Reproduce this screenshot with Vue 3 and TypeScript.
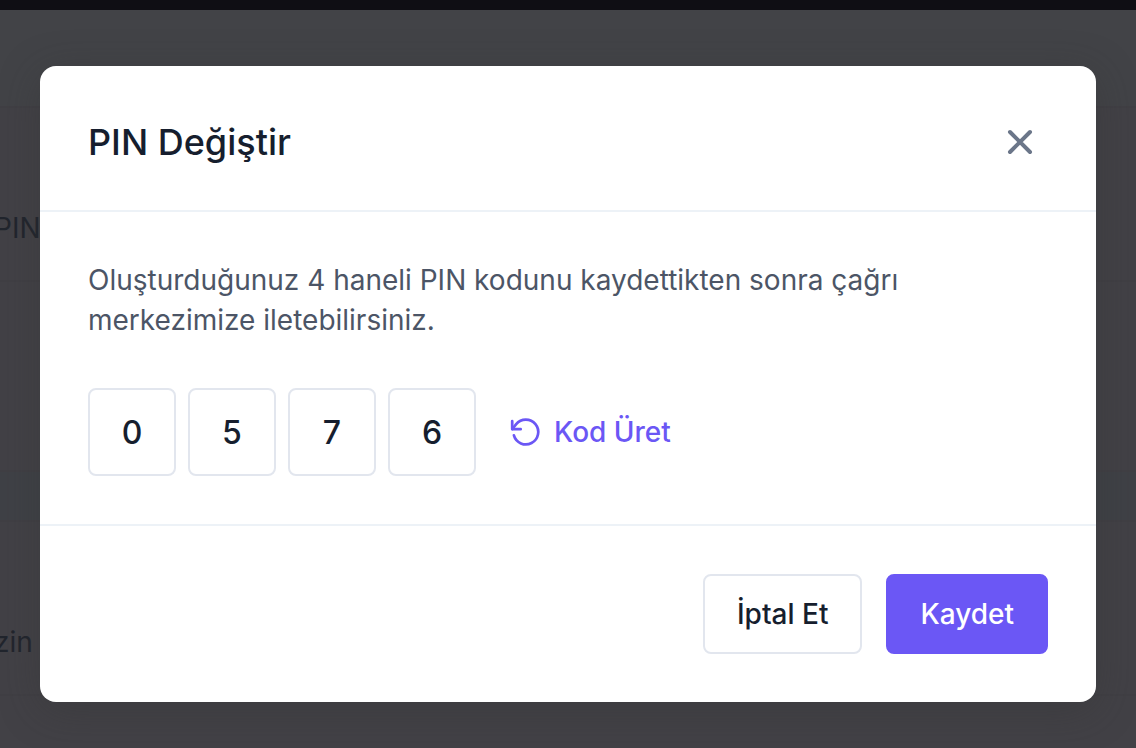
<script setup lang="ts">
import { ref } from 'vue'

const open = ref(true)
const digits = ref<string[]>(['0', '5', '7', '6'])

function generate(): void {
  digits.value = digits.value.map(() => String(Math.floor(Math.random() * 10)))
}

function close(): void {
  open.value = false
}
</script>

<template>
  <div class="screen">
    <div class="page" aria-hidden="true">
      <div class="topbar"></div>
      <div class="heading"></div>
      <div class="row row-pin"><span class="label">PIN</span></div>
      <div class="row row-blank"></div>
      <div class="row row-band"></div>
      <div class="row row-permission"><span class="label">zin</span></div>
    </div>

    <div v-if="open" class="overlay">
      <section class="modal" role="dialog" aria-modal="true" aria-labelledby="pin-title">
        <header class="modal-header">
          <h1 id="pin-title">PIN Değiştir</h1>
          <button class="close" type="button" aria-label="Kapat" @click="close">
            <svg viewBox="0 0 32 32" fill="none" stroke="currentColor" stroke-width="4" stroke-linecap="round">
              <path d="M6 6 26 26M26 6 6 26" />
            </svg>
          </button>
        </header>

        <div class="modal-body">
          <p>Oluşturduğunuz 4 haneli PIN kodunu kaydettikten sonra çağrı merkezimize iletebilirsiniz.</p>
          <div class="code">
            <input
              v-for="(_, i) in digits"
              :key="i"
              v-model="digits[i]"
              class="digit"
              type="text"
              inputmode="numeric"
              maxlength="1"
              :aria-label="`PIN ${i + 1}`"
            />
            <button class="generate" type="button" @click="generate">
              <svg
                viewBox="0 0 32 32"
                fill="none"
                stroke="currentColor"
                stroke-width="2.7"
                stroke-linecap="round"
                stroke-linejoin="round"
              >
                <path d="M2.2 5.2V13.2H10.7" />
                <path d="M2.4 13 6.2 8.2A12.4 12.4 0 1 1 3.9 19.4" />
              </svg>
              Kod Üret
            </button>
          </div>
        </div>

        <footer class="modal-footer">
          <button class="btn btn-cancel" type="button" @click="close">İptal Et</button>
          <button class="btn btn-save" type="button" @click="close">Kaydet</button>
        </footer>
      </section>
    </div>
  </div>
</template>

<style>
body {
  margin: 0;
}
</style>

<style scoped>
.screen {
  position: relative;
  min-height: 100vh;
  overflow: hidden;
  background: #424146;
  font-family: Inter, 'Liberation Sans', sans-serif;
  color: #161e2e;
}

.screen * {
  box-sizing: border-box;
}

.page {
  position: absolute;
  inset: 0;
  overflow: hidden;
  font-size: 28px;
  line-height: 40px;
  color: #21252d;
}

.topbar {
  height: 10px;
  background: #0f0e14;
}

.heading {
  height: 96px;
  background: #424347;
}

.row {
  display: flex;
  align-items: center;
  border-top: 2px solid #403f44;
}

.row-pin {
  height: 174px;
  padding-top: 68px;
}

.row-blank {
  height: 190px;
}

.row-band {
  height: 50px;
  background: #3f4146;
}

.row-permission {
  height: 176px;
  padding-top: 68px;
  border-bottom: 2px solid #403f44;
}

.label {
  margin-left: -6px;
}

.overlay {
  position: relative;
  padding: 66px 40px 46px;
}

.modal {
  border-radius: 16px;
  background: #fff;
  box-shadow: 0 8px 40px rgba(50, 50, 48, 0.35);
}

.modal-header {
  display: flex;
  align-items: center;
  justify-content: space-between;
  padding: 48px 48px 40px;
  border-bottom: 2px solid #edf2f7;
}

h1 {
  margin: 0;
  font-size: 36px;
  font-weight: 500;
  line-height: 56px;
}

button {
  font: inherit;
  cursor: pointer;
}

.close {
  display: flex;
  align-items: center;
  justify-content: center;
  width: 56px;
  height: 56px;
  padding: 0;
  border: 0;
  background: none;
  color: #6b7689;
}

svg {
  width: 32px;
  height: 32px;
}

.modal-body {
  padding: 48px;
}

p {
  margin: 0 0 48px;
  font-size: 28px;
  line-height: 40px;
  color: #4c5566;
}

.code {
  display: flex;
  align-items: center;
  gap: 12px;
}

.digit {
  width: 88px;
  height: 88px;
  padding: 0;
  border: 2px solid #e2e6ee;
  border-radius: 8px;
  background: #fff;
  color: inherit;
  font-family: inherit;
  font-size: 32px;
  font-weight: 500;
  text-align: center;
}

.generate {
  display: flex;
  align-items: center;
  gap: 12px;
  margin-left: 22px;
  padding: 0;
  border: 0;
  background: none;
  color: #6b57f5;
  font-size: 28px;
  font-weight: 500;
  line-height: 40px;
}

.modal-footer {
  display: flex;
  justify-content: flex-end;
  gap: 24px;
  padding: 48px;
  border-top: 2px solid #edf2f7;
}

.btn {
  height: 80px;
  padding: 0 32px;
  border: 2px solid #e2e6ee;
  border-radius: 8px;
  background: #fff;
  color: #161e2e;
  font-size: 28px;
  font-weight: 500;
  line-height: 40px;
}

.btn-save {
  border-color: #6b57f5;
  background: #6b57f5;
  color: #fff;
}
</style>
